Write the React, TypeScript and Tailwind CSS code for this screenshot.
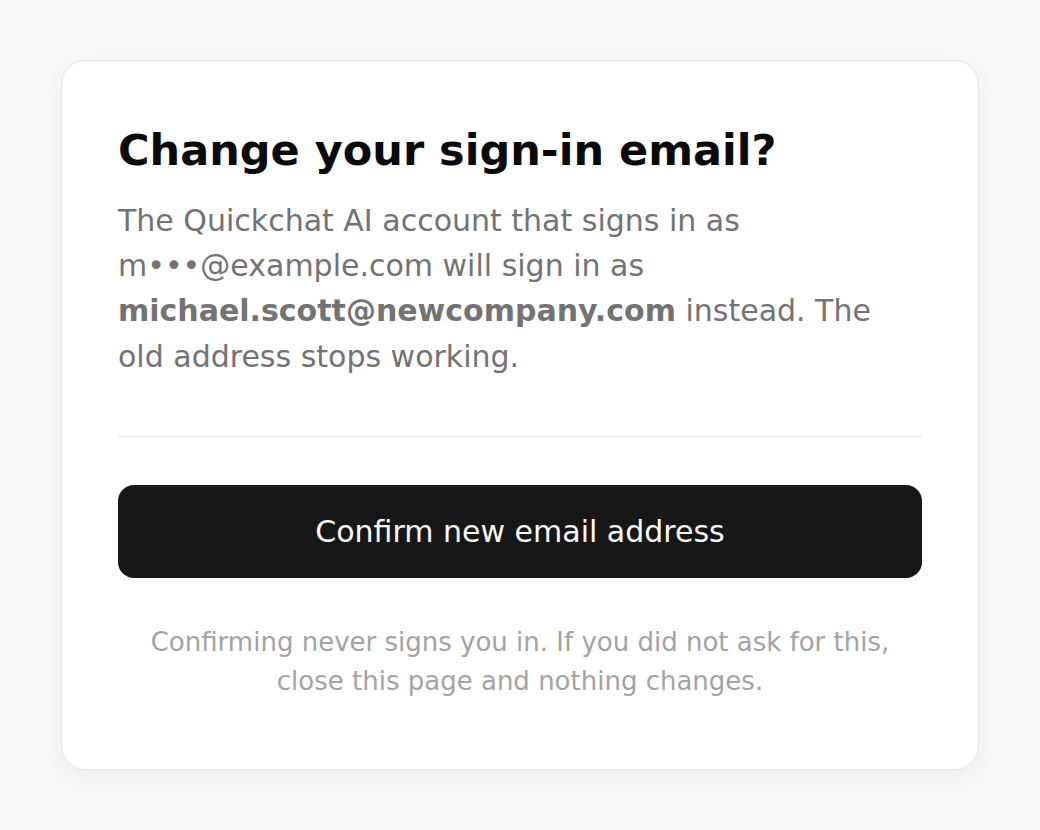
export default function App() {
  return (
    <div className="min-h-screen bg-[#fafafa] pt-[60px] font-['DejaVu_Sans',sans-serif]">
      <div className="mx-auto w-[918px] rounded-[24px] border border-[#e5e5e5] bg-white px-14 pb-[68px] pt-[64px] shadow-[0_8px_32px_rgba(0,0,0,0.06)]">
        <h1 className="text-[43px] font-bold leading-[1.2] text-[#0a0a0a]">Change your sign-in email?</h1>
        <p className="mt-[21px] text-[30px] leading-[1.515] text-[#737373]">
          The Quickchat AI account that signs in as m•••@example.com will sign in as{" "}
          <strong className="font-bold">michael.scott@newcompany.com</strong> instead. The old address stops
          working.
        </p>
        <div className="mt-[57px] h-px bg-[#e5e5e5]" />
        <button
          type="button"
          className="mt-12 w-full rounded-2xl bg-[#171717] py-6 text-[30px] leading-[1.5] text-[#fafafa]"
        >
          Confirm new email address
        </button>
        <p className="mx-auto mt-[45px] max-w-[790px] text-center text-[26px] leading-[1.5] text-[#a3a3a3]">
          Confirming never signs you in. If you did not ask for this, close this page and nothing changes.
        </p>
      </div>
    </div>
  );
}
